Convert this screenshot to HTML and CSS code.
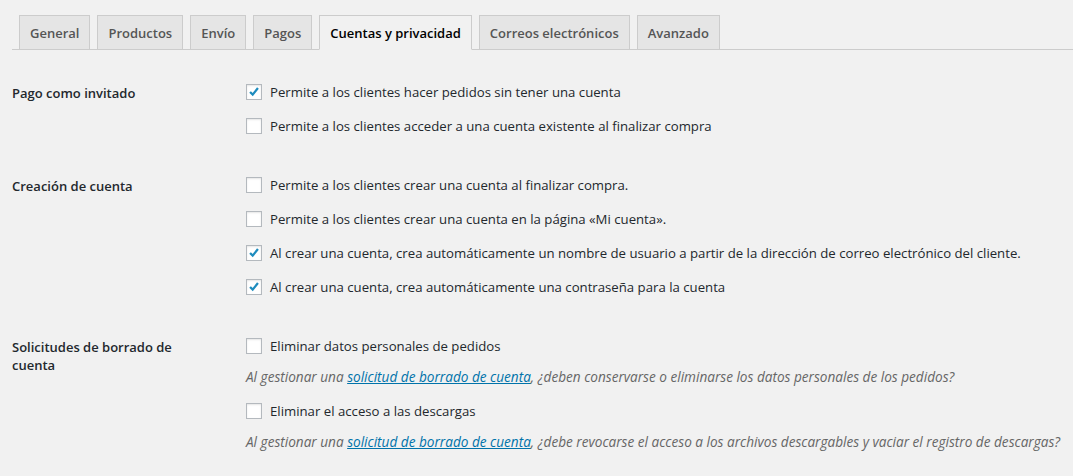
FILE: index.html
```html
<!DOCTYPE html>
<html lang="es">
<head>
<meta charset="utf-8">
<link rel="stylesheet" href="styles.css">
</head>
<body>
<div class="wrap">
  <nav class="tabs">
    <a class="tab">General</a>
    <a class="tab">Productos</a>
    <a class="tab">Envío</a>
    <a class="tab">Pagos</a>
    <a class="tab active">Cuentas y privacidad</a>
    <a class="tab">Correos electrónicos</a>
    <a class="tab">Avanzado</a>
  </nav>

  <div class="form">
    <section class="row">
      <div class="label">Pago como invitado</div>
      <div class="field">
        <label class="option"><span class="cb checked"><svg viewBox="0 0 16 16"><polyline points="3.5,8 6.5,11 12.5,3.5"/></svg></span>Permite a los clientes hacer pedidos sin tener una cuenta</label>
        <label class="option"><span class="cb"></span>Permite a los clientes acceder a una cuenta existente al finalizar compra</label>
      </div>
    </section>

    <section class="row">
      <div class="label">Creación de cuenta</div>
      <div class="field">
        <label class="option"><span class="cb"></span>Permite a los clientes crear una cuenta al finalizar compra.</label>
        <label class="option"><span class="cb"></span>Permite a los clientes crear una cuenta en la página «Mi cuenta».</label>
        <label class="option"><span class="cb checked"><svg viewBox="0 0 16 16"><polyline points="3.5,8 6.5,11 12.5,3.5"/></svg></span>Al crear una cuenta, crea automáticamente un nombre de usuario a partir de la dirección de correo electrónico del cliente.</label>
        <label class="option"><span class="cb checked"><svg viewBox="0 0 16 16"><polyline points="3.5,8 6.5,11 12.5,3.5"/></svg></span>Al crear una cuenta, crea automáticamente una contraseña para la cuenta</label>
      </div>
    </section>

    <section class="row">
      <div class="label">Solicitudes de borrado de cuenta</div>
      <div class="field">
        <label class="option"><span class="cb"></span>Eliminar datos personales de pedidos</label>
        <p class="desc">Al gestionar una <a href="#">solicitud de borrado de cuenta</a>, ¿deben conservarse o eliminarse los datos personales de los pedidos?</p>
        <label class="option"><span class="cb"></span>Eliminar el acceso a las descargas</label>
        <p class="desc">Al gestionar una <a href="#">solicitud de borrado de cuenta</a>, ¿debe revocarse el acceso a los archivos descargables y vaciar el registro de descargas?</p>
      </div>
    </section>
  </div>
</div>
</body>
</html>
```
FILE: styles.css
```css
html, body {
  margin: 0;
  padding: 0;
  background: #f1f1f1;
}
body {
  font-family: "Open Sans", "Noto Sans", sans-serif;
  font-size: 13.2px;
  color: #23282d;
}
.wrap {
  padding: 15px 0 0 12px;
}
.tabs {
  display: flex;
  border-bottom: 1px solid #ccc;
  padding-left: 0;
}
.tab {
  margin-left: 7px;
  margin-bottom: -1px;
  padding: 6px 10px 4px;
  line-height: 23px;
  font-size: 13px;
  font-weight: 600;
  color: #555;
  background: #e5e5e5;
  border: 1px solid #ccc;
  white-space: nowrap;
}
.tab.active {
  color: #000;
  background: #f1f1f1;
  border-bottom-color: #f1f1f1;
}
.form {
  padding-top: 32px;
  display: flex;
  flex-direction: column;
  gap: 39px;
}
.row {
  display: grid;
  grid-template-columns: 234px 1fr;
}
.label {
  font-size: 13px;
  font-weight: 600;
  line-height: 18px;
  padding-top: 2px;
  padding-right: 34px;
}
.field {
  display: flex;
  flex-direction: column;
  gap: 14px;
}
.option {
  display: flex;
  align-items: center;
  height: 20px;
  gap: 8px;
  white-space: nowrap;
}
.cb {
  width: 16px;
  height: 16px;
  box-sizing: border-box;
  border: 1px solid #b4b9be;
  background: #fff;
  box-shadow: inset 0 1px 2px rgba(0,0,0,0.1);
  flex: none;
  display: flex;
}
.cb svg {
  width: 14px;
  height: 14px;
  fill: none;
  stroke: #1e8cbe;
  stroke-width: 2.6;
}
.desc {
  margin: -3px 0 0;
  height: 20px;
  line-height: 20px;
  font-size: 13.6px;
  font-style: italic;
  color: #666;
  white-space: nowrap;
}
.desc a {
  color: #0073aa;
  text-decoration: underline;
}
```
